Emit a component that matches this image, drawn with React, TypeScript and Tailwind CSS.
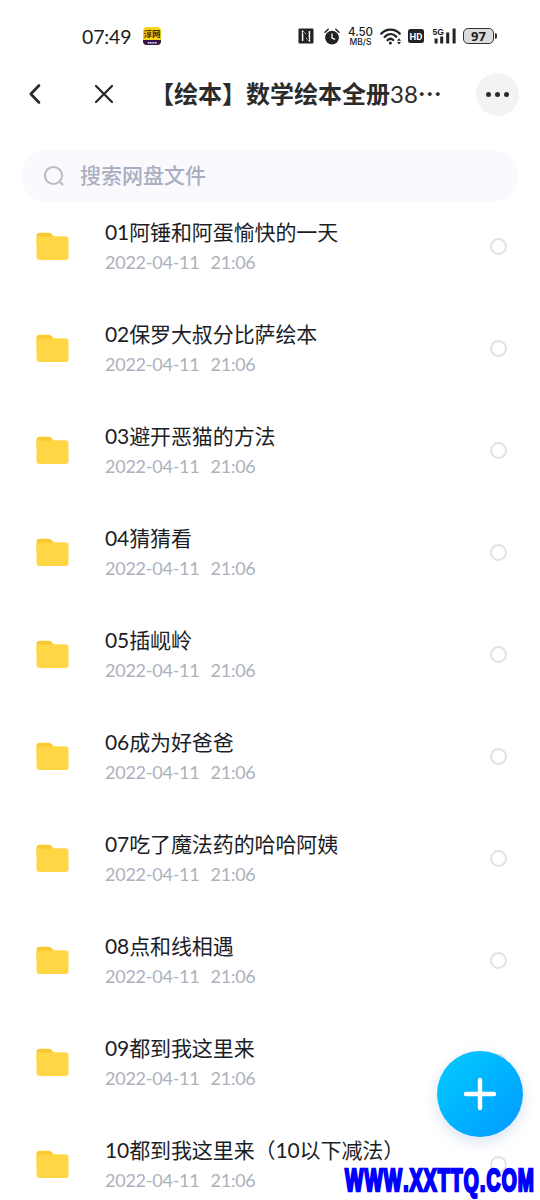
import React from 'react';

interface FolderItem {
  id: number;
  name: string;
  date: string;
  time: string;
}

const folderNames = [
  '01阿锤和阿蛋愉快的一天',
  '02保罗大叔分比萨绘本',
  '03避开恶猫的方法',
  '04猜猜看',
  '05插岘岭',
  '06成为好爸爸',
  '07吃了魔法药的哈哈阿姨',
  '08点和线相遇',
  '09都到我这里来',
  '10都到我这里来（10以下减法）',
];

const folders: FolderItem[] = folderNames.map((name, index) => ({
  id: index,
  name,
  date: '2022-04-11',
  time: '21:06',
}));

function NfcIcon() {
  return (
    <svg width="16" height="16" viewBox="0 0 16 16">
      <rect x="0.5" y="0.5" width="15" height="15" rx="1" fill="#222" />
      <path
        d="M4.6 13V3.6L7.6 6.4M11.4 3V12.4L8.4 9.6"
        fill="none"
        stroke="#fff"
        strokeWidth="1.5"
      />
      <path d="M5.2 4.2L10.8 11.8" stroke="#222" strokeWidth="1.6" />
    </svg>
  );
}

function AlarmIcon() {
  return (
    <svg width="16" height="17" viewBox="0 0 16 17">
      <circle cx="8" cy="9.6" r="6.9" fill="#222" />
      <path
        d="M1 4.3L4.2 1.3M15 4.3L11.8 1.3"
        stroke="#222"
        strokeWidth="1.5"
        strokeLinecap="round"
      />
      <path
        d="M8 6V10L10.6 11.2"
        fill="none"
        stroke="#fff"
        strokeWidth="1.3"
        strokeLinecap="round"
      />
    </svg>
  );
}

function WifiIcon() {
  return (
    <svg width="22" height="17" viewBox="0 0 22 17">
      <g fill="none" stroke="#222" strokeWidth="2.3" strokeLinecap="round">
        <path d="M1.3 5.6C6.3 0.2 14.7 0.2 19.7 5.6" />
        <path d="M4.6 9C8.2 5.3 12.8 5.3 16.2 8.6" />
        <path d="M7.6 12.2C9.5 10.4 11.5 10.4 13.2 12" />
      </g>
      <circle cx="10.4" cy="14.9" r="1.5" fill="#222" />
      <path d="M17 12.8L19 10.3L21 12.8ZM17 14L19 16.5L21 14Z" fill="#222" />
    </svg>
  );
}

function SignalIcon() {
  return (
    <svg width="25" height="22" viewBox="-1 -3 25 22">
      <text
        x="0.5"
        y="7"
        fontSize="9.5"
        fontWeight="700"
        fontFamily="'Liberation Sans', sans-serif"
        textLength="11.5"
        lengthAdjust="spacingAndGlyphs"
        fill="#222"
      >
        5G
      </text>
      <path
        d="M2.6 10.5H5.6V15.5H2.6ZM8.2 8.5H11.2V15.5H8.2ZM14.2 4.5H17.2V15.5H14.2ZM20.6 0.5H23.6V15.5H20.6Z"
        fill="#222"
      />
    </svg>
  );
}

function StatusBar() {
  return (
    <div className="flex h-[72px] shrink-0 items-center pl-[82px] text-[#1c1c1c]">
      <span className="w-[61px] pt-px text-[19.5px] leading-[24px] tracking-[-0.15px]">
        07:49
      </span>
      <div className="flex h-[18px] w-[18px] flex-col overflow-hidden rounded-[4px] bg-[#f6d51b] text-center font-bold">
        <span className="h-[13px] text-[8.5px] leading-[14px] text-[#3b2408]">淳网</span>
        <span className="h-[5px] bg-[#34104a] text-[4px] leading-[5px] text-[#ddc8e0]">
          ●●●●
        </span>
      </div>
      <div className="ml-[137px] flex items-center">
        <NfcIcon />
        <div className="ml-[10px] w-[16px]">
          <AlarmIcon />
        </div>
        <div className="ml-[7px] flex w-[27px] flex-col items-center">
          <span className="text-[11.5px] leading-[12px] font-medium whitespace-nowrap font-['Inter',sans-serif]">
            4.50
          </span>
          <span className="text-[8.5px] leading-[9px] font-medium whitespace-nowrap font-['Inter',sans-serif]">
            MB/S
          </span>
        </div>
        <div className="ml-[6px]">
          <WifiIcon />
        </div>
        <span className="ml-[6px] flex h-[14px] w-[16px] items-center justify-center rounded-[2.5px] bg-[#222] pt-px text-[9.5px] leading-none font-bold text-white font-['Roboto',sans-serif]">
          HD
        </span>
        <div className="ml-[7px]">
          <SignalIcon />
        </div>
        <div className="ml-[7px] flex h-[16px] w-[31px] items-center justify-center rounded-[5px] border-[1.5px] border-[#333] bg-[#dcdcdc] text-[13px] leading-none font-bold font-['Open_Sans',sans-serif]">
          97
        </div>
        <div className="ml-px h-[6px] w-[1.5px] rounded-r bg-[#333]" />
      </div>
    </div>
  );
}

function Header() {
  return (
    <header className="flex h-[44px] shrink-0 items-center text-[#2b2b2b]">
      <svg className="ml-[28px]" width="14" height="22" viewBox="0 0 14 22">
        <path
          d="M11 2.5L2.8 11L11 19.5"
          fill="none"
          stroke="currentColor"
          strokeWidth="2.7"
          strokeLinecap="round"
          strokeLinejoin="round"
        />
      </svg>
      <svg className="ml-[52px]" width="20" height="20" viewBox="0 0 20 20">
        <path
          d="M2 2L18 18M18 2L2 18"
          stroke="currentColor"
          strokeWidth="2.3"
          strokeLinecap="round"
        />
      </svg>
      <h1 className="ml-[36px] w-[326px] pb-[2px] text-[24px] leading-[42px] font-semibold whitespace-nowrap">
        【绘本】数学绘本全册<span className="font-normal">38</span>
        <span className="font-['Noto_Sans_CJK_SC',sans-serif]">…</span>
      </h1>
      <button className="flex h-[43px] w-[43px] items-center justify-center gap-[4px] rounded-full bg-[#f3f3f3]">
        <span className="h-[5px] w-[5px] rounded-full bg-[#2b2b2b]" />
        <span className="h-[5px] w-[5px] rounded-full bg-[#2b2b2b]" />
        <span className="h-[5px] w-[5px] rounded-full bg-[#2b2b2b]" />
      </button>
    </header>
  );
}

function SearchBar() {
  return (
    <div className="mx-[21px] mt-[34px] flex h-[52px] shrink-0 items-center rounded-full bg-[#f9f9fe] pl-[22px]">
      <svg width="22" height="22" viewBox="0 0 22 22">
        <g fill="none" stroke="#babbc0" strokeWidth="2" strokeLinecap="round">
          <circle cx="10.5" cy="10.5" r="8.6" />
          <path d="M16.8 16.8L19.5 19.5" />
        </g>
      </svg>
      <span className="ml-[15px] pb-[2px] text-[21px] font-medium text-[#a9afc1]">
        搜索网盘文件
      </span>
    </div>
  );
}

function FolderIcon() {
  return (
    <svg width="33" height="29" viewBox="0 0 33 29">
      <path
        d="M0.5 4Q0.5 0.8 3.7 0.8H12.5Q14.2 0.8 15.4 2L18.5 5.2V12H0.5Z"
        fill="#fac931"
      />
      <path
        d="M0.5 6.8Q0.5 4.8 3 4.8H14Q15.6 4.8 17 4.3H29.3Q32.5 4.3 32.5 7.5V24.8Q32.5 28 29.3 28H3.7Q0.5 28 0.5 24.8Z"
        fill="#ffd645"
      />
    </svg>
  );
}

function FolderRow({ item }: { item: FolderItem }) {
  return (
    <li className="flex h-[102px] shrink-0 items-start pl-[36px]">
      <div className="mt-[30px] w-[69px]">
        <FolderIcon />
      </div>
      <div className="mt-[14px] flex w-[385px] flex-col">
        <span className="text-[21px] leading-[32px] tracking-[-0.1px] whitespace-nowrap text-[#1b1e27]">
          {item.name}
        </span>
        <span className="mt-px flex gap-[11px] text-[18px] leading-[26px] tracking-[-0.24px] text-[#adb1be]">
          <span>{item.date}</span>
          <span>{item.time}</span>
        </span>
      </div>
      <span className="mt-[36px] h-[17px] w-[17px] rounded-full border-2 border-[#e2e2e2]" />
    </li>
  );
}

export default function App() {
  return (
    <div className="relative flex h-[1200px] w-[540px] flex-col overflow-hidden bg-white font-['Lato','Noto_Sans_CJK_SC',sans-serif]">
      <StatusBar />
      <Header />
      <SearchBar />
      <ul className="flex flex-col">
        {folders.map((item) => (
          <FolderRow key={item.id} item={item} />
        ))}
      </ul>

      <button className="absolute top-[1051px] left-[437px] flex h-[86px] w-[86px] items-center justify-center rounded-full bg-linear-to-br from-[#08ccff] to-[#0799ff] shadow-[0_5px_14px_rgba(80,120,190,0.22)]">
        <svg width="34" height="34" viewBox="0 0 34 34">
          <path
            d="M17 3V31M3 17H31"
            stroke="#fff"
            strokeWidth="4.4"
            strokeLinecap="round"
          />
        </svg>
      </button>

      <span className="absolute top-[1160px] left-[345px] origin-left scale-x-[0.632] text-[30.5px] leading-[40px] font-bold tracking-[1.9px] whitespace-nowrap text-[#0000fe] [-webkit-text-stroke:2.6px_#0000fe] [font-kerning:none] font-['Liberation_Sans',sans-serif]">
        WWW.XXTTQ.COM
      </span>
    </div>
  );
}
